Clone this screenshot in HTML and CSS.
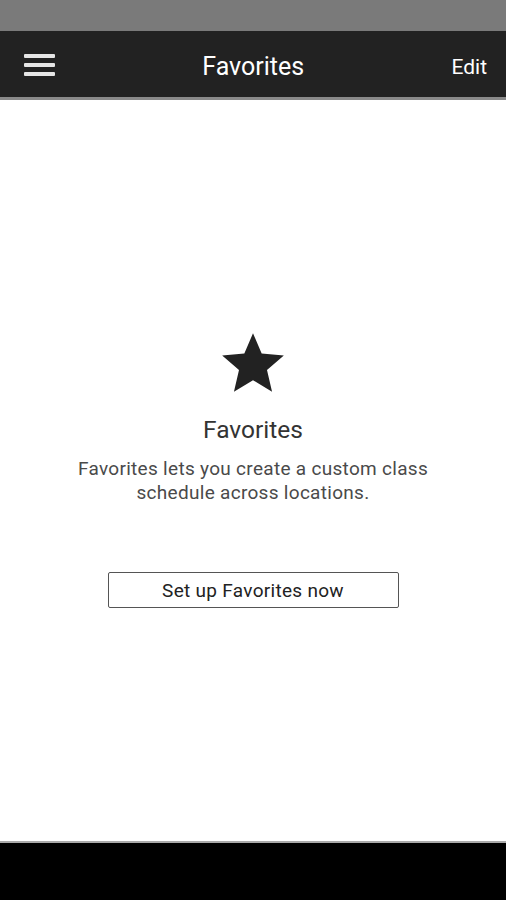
FILE: index.html
```html
<!DOCTYPE html>
<html>
<head>
<meta charset="utf-8">
<link rel="stylesheet" href="styles.css">
</head>
<body>
<div class="screen">
  <div class="status"></div>
  <header class="toolbar">
    <div class="menu" aria-label="Menu">
      <span></span><span></span><span></span>
    </div>
    <h1 class="title">Favorites</h1>
    <div class="edit">Edit</div>
  </header>
  <main class="content">
    <svg class="star" viewBox="0 0 24 24" width="74" height="74">
      <path d="M12 17.27L18.18 21l-1.64-7.03L22 9.24l-7.19-.61L12 2 9.19 8.63 2 9.24l5.46 4.73L5.82 21z" fill="#222"/>
    </svg>
    <h2 class="heading">Favorites</h2>
    <p class="desc">Favorites lets you create a custom class<br>schedule across locations.</p>
    <button class="setup">Set up Favorites now</button>
  </main>
  <footer class="navbar"></footer>
</div>
</body>
</html>
```
FILE: styles.css
```css
html, body {
  margin: 0;
  padding: 0;
  background: #fff;
}
.screen {
  width: 506px;
  height: 900px;
  display: flex;
  flex-direction: column;
  font-family: Roboto, "Liberation Sans", sans-serif;
  overflow: hidden;
}
.status {
  height: 31px;
  background: #7a7a7a;
  flex: none;
}
.toolbar {
  height: 66px;
  box-sizing: border-box;
  flex: none;
  background: #222;
  display: flex;
  align-items: center;
  padding: 5px 19px 0 24px;
}
.menu {
  width: 31px;
  margin-top: -4px;
  display: flex;
  flex-direction: column;
  gap: 5px;
}
.menu span {
  display: block;
  height: 4px;
  background: #e6e6e6;
  border-radius: 1px;
}
.title {
  flex: 1;
  margin: 0 0 0 0;
  text-align: center;
  color: #fff;
  font-size: 25px;
  font-weight: 400;
}
.edit {
  color: #fff;
  font-size: 21px;
}
.content {
  flex: 1;
  display: flex;
  flex-direction: column;
  align-items: center;
  padding-top: 227px;
  border-top: 3px solid #8a8a8a;
}
.star {
  display: block;
}
.heading {
  margin: 14px 0 0;
  font-size: 24.5px;
  font-weight: 400;
  color: #333;
  line-height: 30px;
}
.desc {
  margin: 12px 0 0;
  font-size: 19px;
  letter-spacing: 0.3px;
  line-height: 24px;
  color: #4a4a4a;
  text-align: center;
}
.setup {
  margin-top: 67px;
  width: 291px;
  height: 36px;
  background: #fff;
  border: 1.5px solid #555;
  border-radius: 2px;
  font-family: Roboto, "Liberation Sans", sans-serif;
  font-size: 19px;
  letter-spacing: 0.3px;
  color: #222;
  padding: 0;
}
.navbar {
  height: 57px;
  flex: none;
  background: #000;
  border-top: 2px solid #aaa;
}
```
